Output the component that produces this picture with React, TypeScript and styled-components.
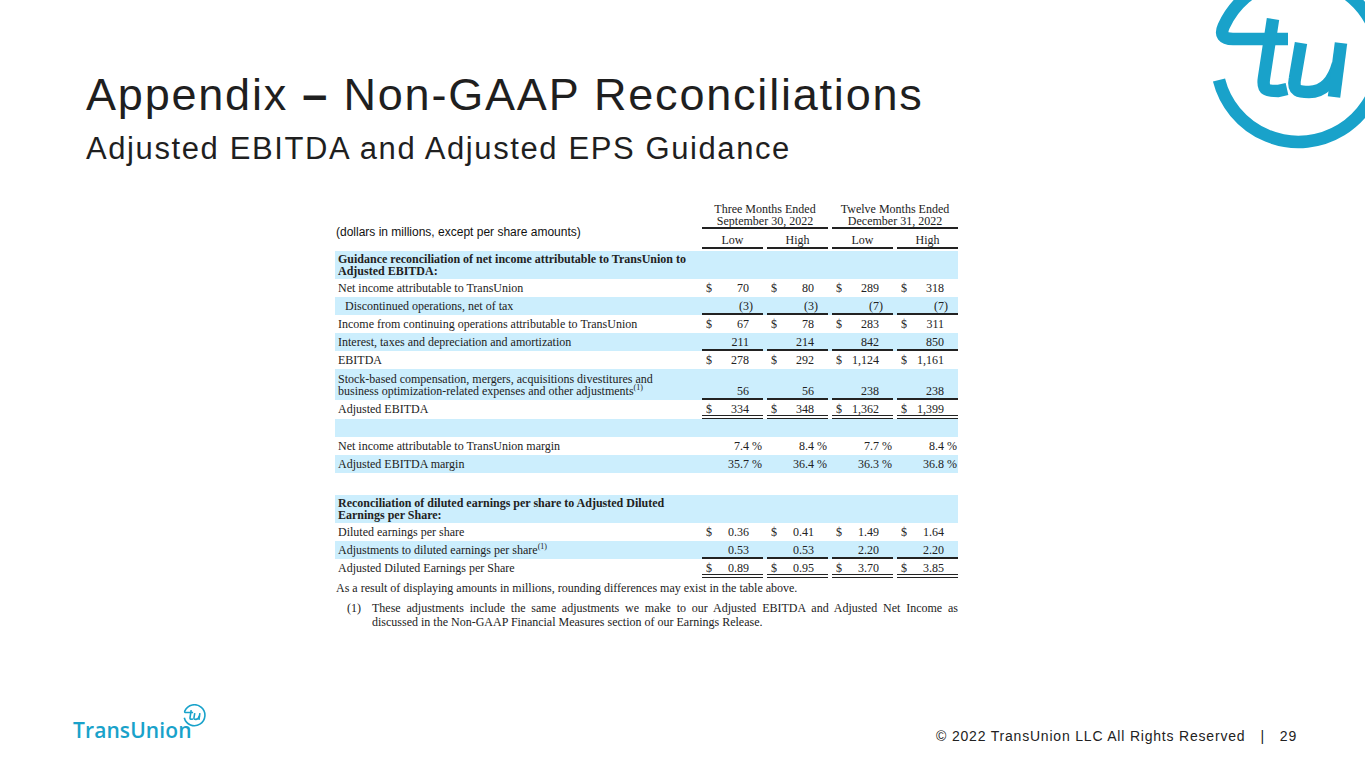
import React from "react";
import styled, { createGlobalStyle } from "styled-components";

const TEAL = "#19a2ca";
const SHADE = "#cceefd";
const INK = "#222";

const GlobalStyle = createGlobalStyle`
  html, body {
    margin: 0;
    padding: 0;
    background: #fff;
  }
  body {
    font-family: "Liberation Sans", Arial, sans-serif;
    color: ${INK};
  }
`;

const Page = styled.div`
  width: 1365px;
  height: 768px;
  box-sizing: border-box;
  display: flex;
  flex-direction: column;
  overflow: hidden;
  background: #fff;
`;

const Header = styled.header`
  display: flex;
  justify-content: space-between;
  align-items: flex-start;
`;

const TitleBlock = styled.div`
  padding: 72px 0 0 86px;
`;

const Title = styled.h1`
  margin: 0;
  font: 400 45px/45px "Liberation Sans", Arial, sans-serif;
  letter-spacing: 1.8px;
  color: #1f1f1f;
`;

const Dash = styled.span`
  font-weight: 700;
`;

const Subtitle = styled.h2`
  margin: 16px 0 0;
  font: 400 31px/31px "Liberation Sans", Arial, sans-serif;
  letter-spacing: 1.6px;
  color: #1f1f1f;
`;

const CornerMark = styled.svg`
  flex-shrink: 0;
  display: block;
`;

const Table = styled.div`
  margin: 36px 0 0 335px;
  width: 623px;
  font: 12px/12px "Liberation Serif", "Times New Roman", serif;
  color: ${INK};
`;

const Row = styled.div<{ $shade?: boolean; $height?: number; $gap?: number }>`
  display: grid;
  grid-template-columns: 363px repeat(4, 61px);
  column-gap: 4px;
  background: ${(p) => (p.$shade ? SHADE : "transparent")};
  ${(p) => (p.$height ? `height: ${p.$height}px;` : "")}
  ${(p) => (p.$gap ? `margin-bottom: ${p.$gap}px;` : "")}
`;

const Label = styled.div<{ $indent?: boolean; $two?: boolean }>`
  padding: ${(p) => (p.$two ? "4px 0 3px" : "3px 0")};
  padding-left: ${(p) => (p.$indent ? 10 : 3)}px;
  white-space: nowrap;
`;

const SectionLabel = styled.div`
  grid-column: 1 / -1;
  padding: 3px 0 2px 3px;
  font-weight: 700;
  line-height: 11.5px;
  white-space: nowrap;
`;

const Units = styled.div`
  align-self: start;
  margin-top: -3px;
  padding-left: 1px;
  font: 12px/12px "Liberation Sans", Arial, sans-serif;
  color: #111;
  white-space: nowrap;
`;

const GroupHead = styled.div`
  grid-column: span 2;
  text-align: center;
  padding: 3px 0 0;
  border-bottom: 2px solid ${INK};
`;

const ColHead = styled.div`
  text-align: center;
  padding: 5px 0 1px;
  border-bottom: 2px solid ${INK};
`;

type Rule = "single" | "double";

const Value = styled.div<{ $rule?: Rule }>`
  align-self: end;
  display: grid;
  grid-template-columns: auto 1fr 14px;
  padding: 3px 0 ${(p) => (p.$rule === "double" ? 0 : p.$rule ? 1 : 3)}px 4px;
  border-bottom: ${(p) =>
    p.$rule === "double" ? `4px double ${INK}` : p.$rule ? `2px solid ${INK}` : "none"};
`;

const Num = styled.span`
  text-align: right;
`;

const Suffix = styled.span`
  white-space: pre;
`;

const Sup = styled.sup`
  font-size: 8px;
  line-height: 0;
  vertical-align: 5px;
`;

const Notes = styled.div`
  margin-left: 336px;
  width: 622px;
  font: 12px/14px "Liberation Serif", "Times New Roman", serif;
  color: ${INK};
`;

const Note = styled.p`
  margin: 3px 0 0;
`;

const Footnote = styled.div`
  display: grid;
  grid-template-columns: 25px 1fr;
  margin: 6px 0 0 11px;
`;

const JustLine = styled.span`
  display: block;
  text-align: justify;
  text-align-last: justify;
`;

const Footer = styled.footer`
  margin-top: auto;
  display: flex;
  justify-content: space-between;
  align-items: flex-end;
  padding: 0 68px 24px 73px;
`;

const Brand = styled.div`
  display: flex;
  align-items: flex-start;
  margin-bottom: 3px;
  color: ${TEAL};
`;

const Wordmark = styled.span`
  margin-top: 16px;
  font: 600 21px/21px "Open Sans", "Liberation Sans", sans-serif;
  letter-spacing: 0.1px;
`;

const MiniMark = styled.svg`
  display: block;
  margin: 0 0 0 -9px;
`;

const Copyright = styled.div`
  display: flex;
  gap: 15px;
  font: 14px/16px "Liberation Sans", Arial, sans-serif;
  letter-spacing: 0.8px;
  color: ${INK};
`;

const LogoPaths = () => (
  <g fill="none" stroke={TEAL} strokeWidth={12.5}>
    <path d="M24 80 A82 82 0 1 0 28.7 26.3 Q23 39 38 39 L93 39" />
    <path d="M78 19 L69 78 C67 91 73 91 83 91 L92 89" />
    <path d="M106 43 L100 78 C97 92 105 92 114 92 C128 92 138 82 143 64" />
    <path d="M146 43 L139 97" />
  </g>
);

type Cell = { d?: boolean; n: string; s?: string };

type Line =
  | { type: "section"; text: React.ReactNode }
  | { type: "blank"; shade?: boolean; h: number }
  | {
      type: "data";
      label: React.ReactNode;
      shade?: boolean;
      indent?: boolean;
      two?: boolean;
      rule?: Rule;
      cells: Cell[];
    };

const usd = (n: string): Cell => ({ d: true, n });
const neg = (n: string): Cell => ({ n: `(${n}`, s: ")" });
const pct = (n: string): Cell => ({ n, s: "\u00a0%" });
const num = (n: string): Cell => ({ n });

const lines: Line[] = [
  {
    type: "section",
    text: (
      <>
        Guidance reconciliation of net income attributable to TransUnion to
        <br />
        Adjusted EBITDA:
      </>
    ),
  },
  { type: "data", label: "Net income attributable to TransUnion", cells: [usd("70"), usd("80"), usd("289"), usd("318")] },
  {
    type: "data",
    label: "Discontinued operations, net of tax",
    shade: true,
    indent: true,
    rule: "single",
    cells: [neg("3"), neg("3"), neg("7"), neg("7")],
  },
  {
    type: "data",
    label: "Income from continuing operations attributable to TransUnion",
    cells: [usd("67"), usd("78"), usd("283"), usd("311")],
  },
  {
    type: "data",
    label: "Interest, taxes and depreciation and amortization",
    shade: true,
    rule: "single",
    cells: [num("211"), num("214"), num("842"), num("850")],
  },
  { type: "data", label: "EBITDA", cells: [usd("278"), usd("292"), usd("1,124"), usd("1,161")] },
  {
    type: "data",
    label: (
      <>
        Stock-based compensation, mergers, acquisitions divestitures and
        <br />
        business optimization-related expenses and other adjustments<Sup>(1)</Sup>
      </>
    ),
    shade: true,
    two: true,
    rule: "single",
    cells: [num("56"), num("56"), num("238"), num("238")],
  },
  {
    type: "data",
    label: "Adjusted EBITDA",
    rule: "double",
    cells: [usd("334"), usd("348"), usd("1,362"), usd("1,399")],
  },
  { type: "blank", shade: true, h: 18 },
  {
    type: "data",
    label: "Net income attributable to TransUnion margin",
    cells: [pct("7.4"), pct("8.4"), pct("7.7"), pct("8.4")],
  },
  {
    type: "data",
    label: "Adjusted EBITDA margin",
    shade: true,
    cells: [pct("35.7"), pct("36.4"), pct("36.3"), pct("36.8")],
  },
  { type: "blank", h: 22 },
  {
    type: "section",
    text: (
      <>
        Reconciliation of diluted earnings per share to Adjusted Diluted
        <br />
        Earnings per Share:
      </>
    ),
  },
  { type: "data", label: "Diluted earnings per share", cells: [usd("0.36"), usd("0.41"), usd("1.49"), usd("1.64")] },
  {
    type: "data",
    label: (
      <>
        Adjustments to diluted earnings per share<Sup>(1)</Sup>
      </>
    ),
    shade: true,
    rule: "single",
    cells: [num("0.53"), num("0.53"), num("2.20"), num("2.20")],
  },
  {
    type: "data",
    label: "Adjusted Diluted Earnings per Share",
    rule: "double",
    cells: [usd("0.89"), usd("0.95"), usd("3.70"), usd("3.85")],
  },
];

const App = () => {
  return (
    <>
      <GlobalStyle />
      <Page>
        <Header>
          <TitleBlock>
            <Title>
              Appendix <Dash>–</Dash> Non-GAAP Reconciliations
            </Title>
            <Subtitle>Adjusted EBITDA and Adjusted EPS Guidance</Subtitle>
          </TitleBlock>
          <CornerMark width={170} height={160} viewBox="0 0 170 160">
            <LogoPaths />
          </CornerMark>
        </Header>

        <Table>
          <Row>
            <div />
            <GroupHead>
              Three Months Ended
              <br />
              September 30, 2022
            </GroupHead>
            <GroupHead>
              Twelve Months Ended
              <br />
              December 31, 2022
            </GroupHead>
          </Row>
          <Row $gap={2}>
            <Units>(dollars in millions, except per share amounts)</Units>
            <ColHead>Low</ColHead>
            <ColHead>High</ColHead>
            <ColHead>Low</ColHead>
            <ColHead>High</ColHead>
          </Row>
          {lines.map((l, i) => {
            if (l.type === "section")
              return (
                <Row key={i} $shade>
                  <SectionLabel>{l.text}</SectionLabel>
                </Row>
              );
            if (l.type === "blank") return <Row key={i} $shade={l.shade} $height={l.h} />;
            return (
              <Row key={i} $shade={l.shade}>
                <Label $indent={l.indent} $two={l.two}>
                  {l.label}
                </Label>
                {l.cells.map((c, j) => (
                  <Value key={j} $rule={l.rule}>
                    <span>{c.d ? "$" : ""}</span>
                    <Num>{c.n}</Num>
                    <Suffix>{c.s ?? ""}</Suffix>
                  </Value>
                ))}
              </Row>
            );
          })}
        </Table>

        <Notes>
          <Note>As a result of displaying amounts in millions, rounding differences may exist in the table above.</Note>
          <Footnote>
            <span>(1)</span>
            <span>
              <JustLine>
                These adjustments include the same adjustments we make to our Adjusted EBITDA and Adjusted Net Income as
              </JustLine>
              discussed in the Non-GAAP Financial Measures section of our Earnings Release.
            </span>
          </Footnote>
        </Notes>

        <Footer>
          <Brand>
            <Wordmark>TransUnion</Wordmark>
            <MiniMark width={23} height={23} viewBox="14 -28 180 180">
              <LogoPaths />
            </MiniMark>
          </Brand>
          <Copyright>
            <span>© 2022 TransUnion LLC All Rights Reserved</span>
            <span>|</span>
            <span>29</span>
          </Copyright>
        </Footer>
      </Page>
    </>
  );
};

export default App;
